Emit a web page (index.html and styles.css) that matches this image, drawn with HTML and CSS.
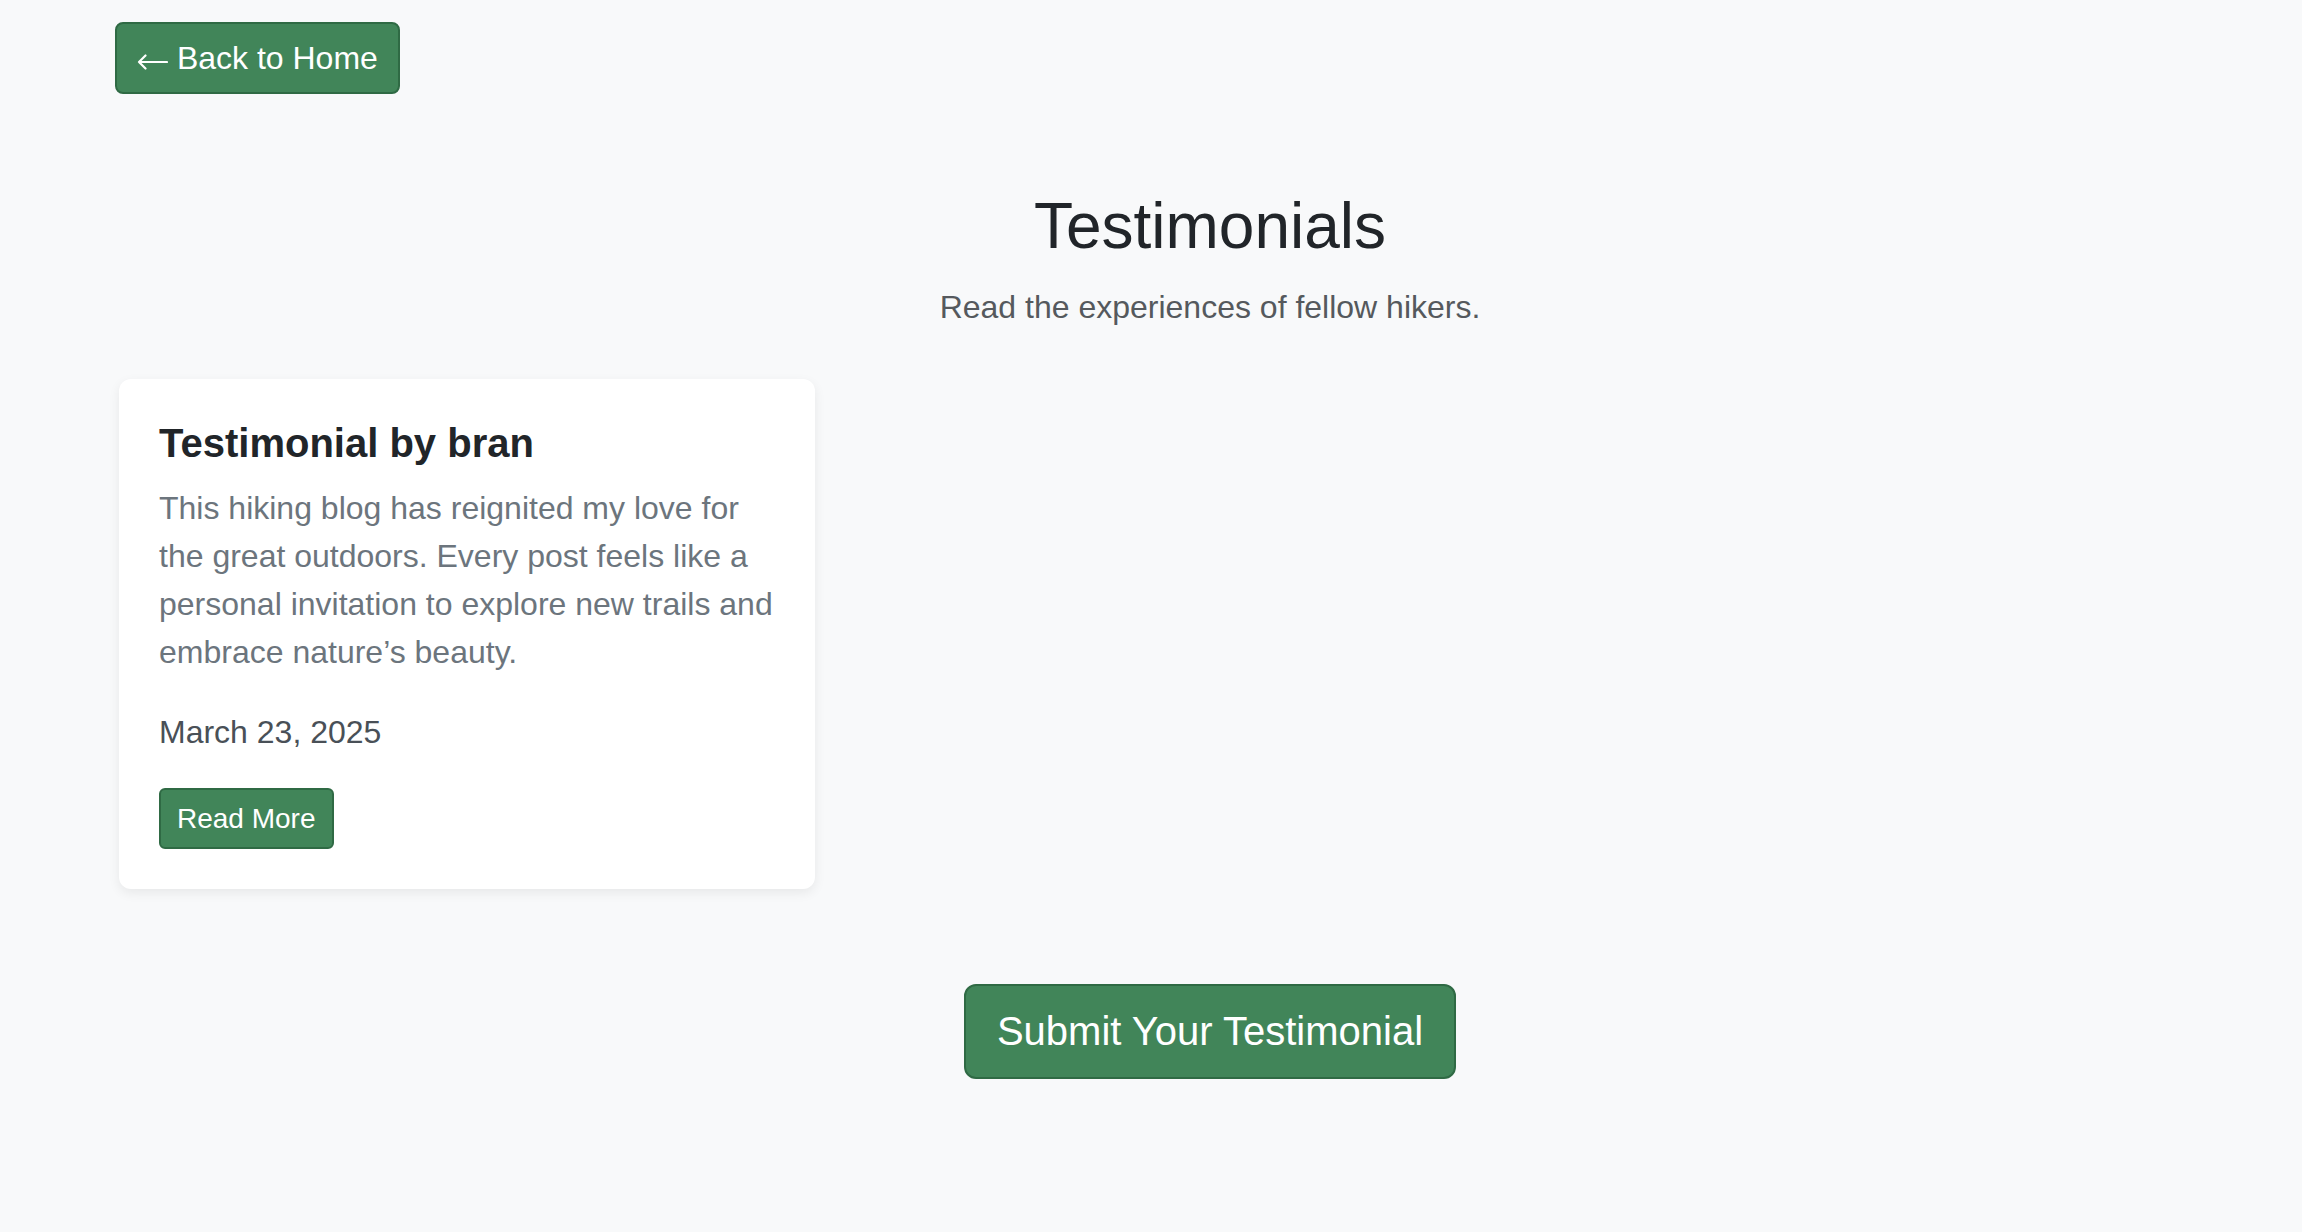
FILE: index.html
```html
<!DOCTYPE html>
<html lang="en">
<head>
<meta charset="utf-8">
<title>Testimonials</title>
<link rel="stylesheet" href="styles.css">
</head>
<body>
<div class="page">
  <a class="btn btn-back" href="#"><svg class="arrow" width="31" height="16" viewBox="0 0 31 16" aria-hidden="true"><path d="M30 8H2M8.5 1.5L2 8l6.5 6.5" fill="none" stroke="#ffffff" stroke-width="2.2" stroke-linecap="round" stroke-linejoin="round"/></svg> Back to Home</a>

  <header class="header">
    <h1 class="title">Testimonials</h1>
    <p class="subtitle">Read the experiences of fellow hikers.</p>
  </header>

  <section class="cards">
    <article class="card">
      <h5 class="card-title">Testimonial by bran</h5>
      <p class="card-text">This hiking blog has reignited my love for the great outdoors. Every post feels like a personal invitation to explore new trails and embrace nature’s beauty.</p>
      <p class="card-date">March 23, 2025</p>
      <a class="btn btn-sm" href="#">Read More</a>
    </article>
  </section>

  <div class="submit-wrap">
    <a class="btn btn-lg" href="#">Submit Your Testimonial</a>
  </div>
</div>
</body>
</html>
```

FILE: styles.css
```css
* { box-sizing: border-box; }

html, body {
  margin: 0;
  background: #f8f9fa;
}

body {
  font-family: "Liberation Sans", Arial, Helvetica, sans-serif;
  color: #212529;
  overflow-x: hidden;
}

.page {
  padding: 22px 0 0 115px;
  min-height: 1232px;
}

.btn {
  display: inline-block;
  background: #418559;
  color: #ffffff;
  border: 2px solid #2f6a44;
  text-decoration: none;
  white-space: nowrap;
}

.btn-back {
  font-size: 32px;
  line-height: 48px;
  padding: 10px 20px;
  border-radius: 8px;
}

.arrow {
  display: inline-block;
  vertical-align: -1px;
}

.header {
  text-align: center;
  margin-top: 94px;
  padding-left: 3px;
}

.title {
  font-size: 64px;
  font-weight: 400;
  line-height: 1.2;
  margin: 0 0 18px;
  color: #212529;
}

.subtitle {
  font-size: 32px;
  line-height: 48px;
  margin: 0;
  color: #55595d;
}

.cards {
  display: grid;
  grid-template-columns: 696px;
  margin-top: 48px;
  padding-left: 4px;
}

.card {
  background: #ffffff;
  border-radius: 12px;
  box-shadow: 0 4px 12px rgba(0, 0, 0, 0.07);
  padding: 40px;
}

.card-title {
  font-size: 40px;
  font-weight: 700;
  line-height: 48px;
  margin: 0 0 17px;
  color: #212529;
}

.card-text {
  font-size: 32px;
  line-height: 48px;
  margin: 0 0 32px;
  color: #6c757d;
}

.card-date {
  font-size: 32px;
  line-height: 48px;
  margin: 0 0 32px;
  color: #495057;
}

.btn-sm {
  font-size: 28px;
  line-height: 41px;
  padding: 8px 16px;
  border-radius: 6px;
}

.submit-wrap {
  text-align: center;
  margin-top: 95px;
  padding-left: 3px;
}

.btn-lg {
  font-size: 40px;
  line-height: 60px;
  padding: 15.5px 31px;
  border-radius: 12px;
}
```
